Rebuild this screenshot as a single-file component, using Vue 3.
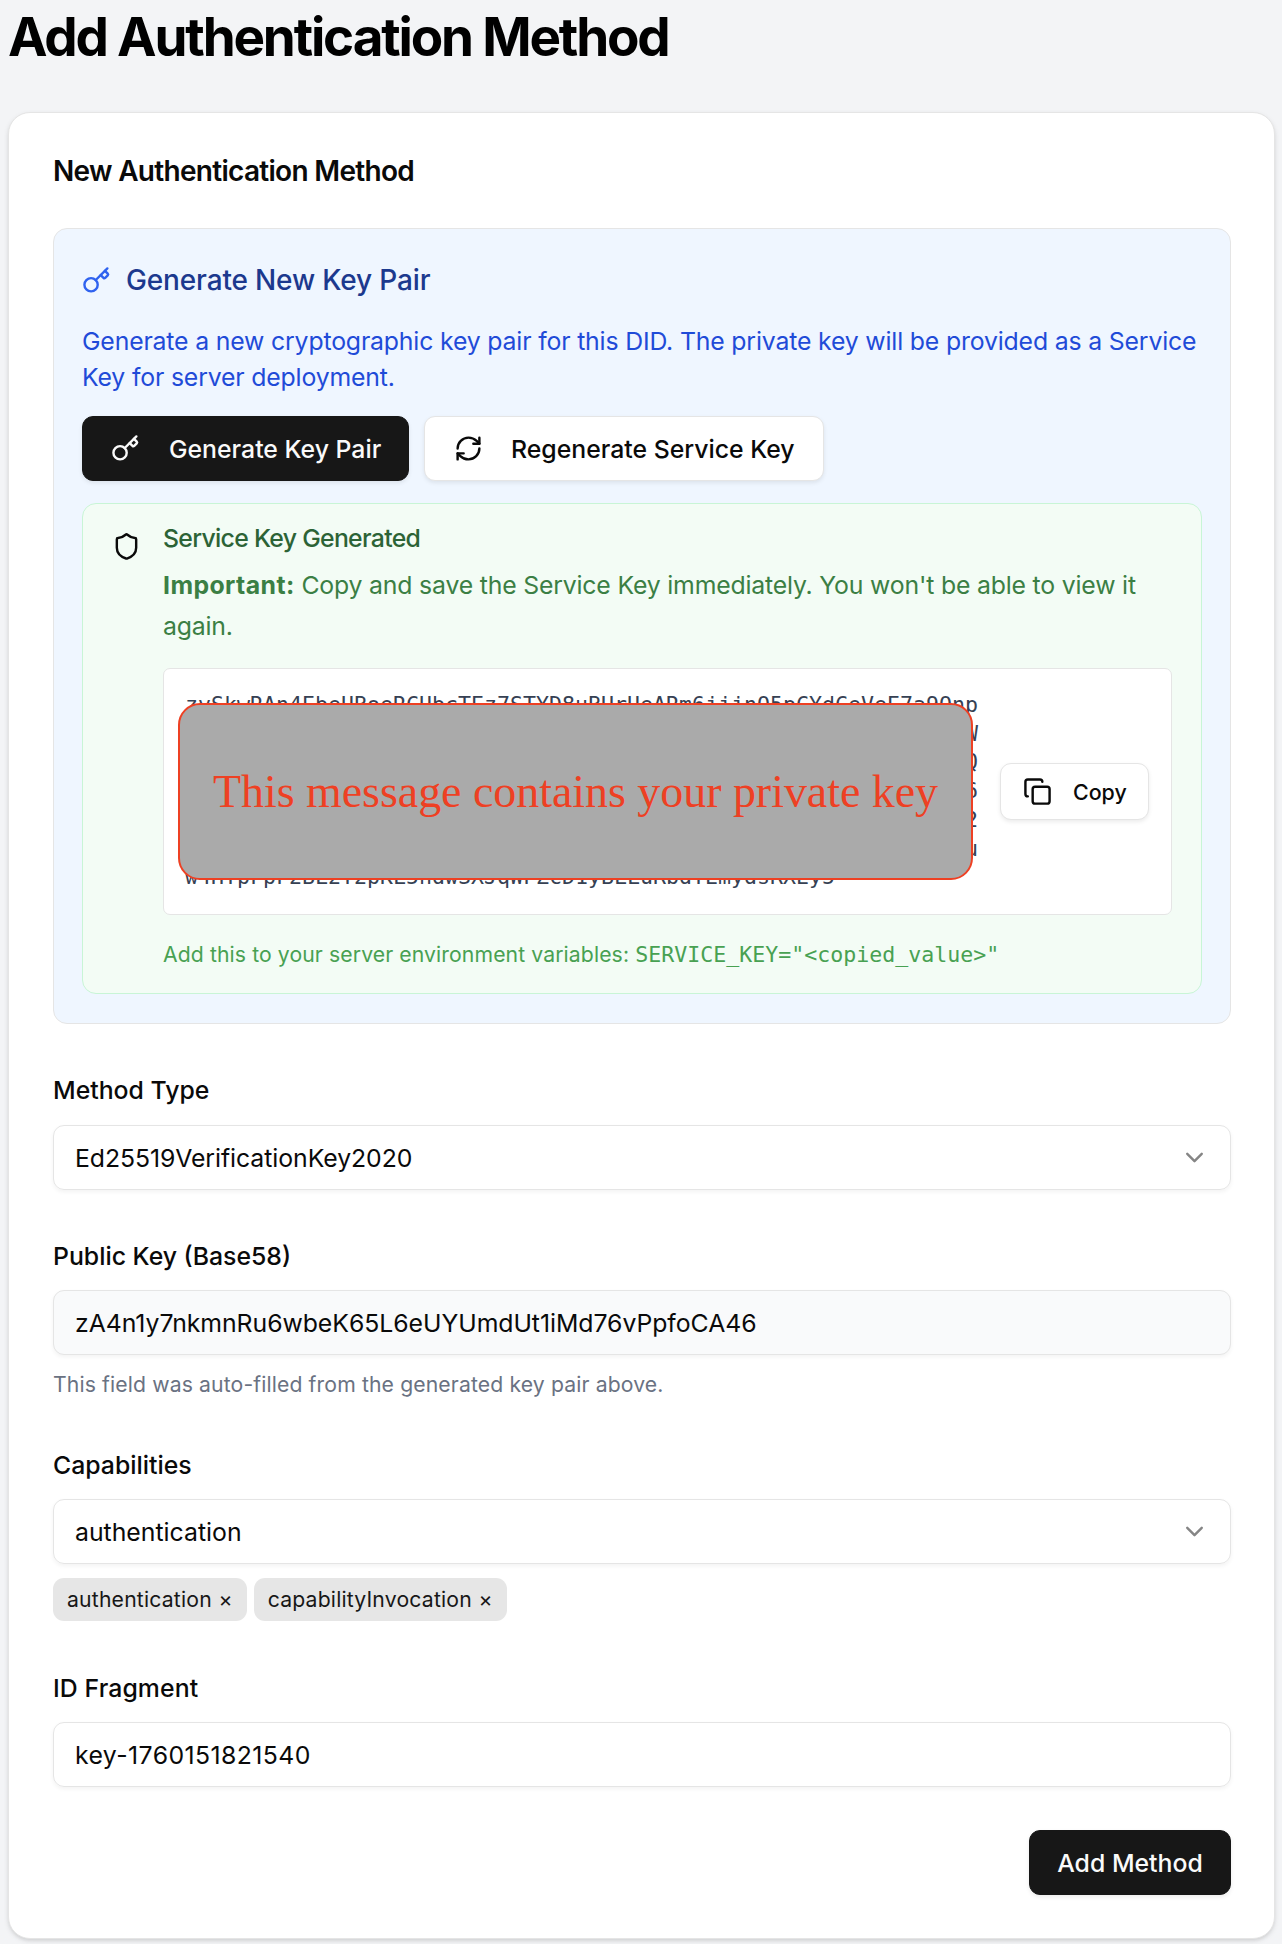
<script setup>
const keyLines = [
  'zvSkwRAn4EbeUBoeRCUbcTEz7STYD8uBHrUeARm6jjjnO5pCYdCeVeE7a9Onp',
  'W',
  'Q',
  '6',
  '2',
  'u',
  'w4HTpFpF2BL2T2pKL5ndwSXJqWFZcD1yBLLuRbdTEmydsRXEy5',
]
const chips = ['authentication', 'capabilityInvocation']
</script>

<template>
  <main class="page">
    <h1>Add Authentication Method</h1>
    <section class="card">
      <h2>New Authentication Method</h2>

      <div class="generate">
        <div class="gen-title">
          <svg class="icon blue" viewBox="0 0 24 24"><path d="m15.5 7.5 2.3 2.3a1 1 0 0 0 1.4 0l2.1-2.1a1 1 0 0 0 0-1.4L19 4" /><path d="m21 2-9.6 9.6" /><circle cx="7.5" cy="15.5" r="5.5" /></svg>
          <h3>Generate New Key Pair</h3>
        </div>
        <p class="desc">Generate a new cryptographic key pair for this DID. The private key will be provided as a Service<br>Key for server deployment.</p>
        <div class="actions">
          <button class="btn dark gen"><svg class="icon" viewBox="0 0 24 24"><path d="m15.5 7.5 2.3 2.3a1 1 0 0 0 1.4 0l2.1-2.1a1 1 0 0 0 0-1.4L19 4" /><path d="m21 2-9.6 9.6" /><circle cx="7.5" cy="15.5" r="5.5" /></svg><span>Generate Key Pair</span></button>
          <button class="btn light regen"><svg class="icon" viewBox="0 0 24 24"><path d="M3 12a9 9 0 0 1 9-9 9.75 9.75 0 0 1 6.74 2.74L21 8" /><path d="M21 3v5h-5" /><path d="M21 12a9 9 0 0 1-9 9 9.75 9.75 0 0 1-6.74-2.74L3 16" /><path d="M8 16H3v5" /></svg><span>Regenerate Service Key</span></button>
        </div>

        <div class="alert">
          <svg class="icon shield" viewBox="0 0 24 24"><path d="M20 13c0 5-3.5 7.5-7.66 8.95a1 1 0 0 1-.67-.01C7.5 20.5 4 18 4 13V6a1 1 0 0 1 1-1c2 0 4.5-1.2 6.24-2.72a1.17 1.17 0 0 1 1.52 0C14.51 3.81 17 5 19 5a1 1 0 0 1 1 1z" /></svg>
          <div class="alert-body">
            <h4>Service Key Generated</h4>
            <p class="important"><strong>Important:</strong> Copy and save the Service Key immediately. You won't be able to view it<br>again.</p>
            <div class="keybox">
              <code class="key"><span v-for="(line, i) in keyLines" :key="i" :class="{ tail: line.length === 1 }">{{ line }}</span></code>
              <button class="btn light copy"><svg class="icon" viewBox="0 0 24 24"><rect x="8" y="8" width="14" height="14" rx="2" /><path d="M4 16c-1.1 0-2-.9-2-2V4c0-1.1.9-2 2-2h10c1.1 0 2 .9 2 2" /></svg><span>Copy</span></button>
              <div class="cover">This message contains your private key</div>
            </div>
            <p class="env">Add this to your server environment variables: <code>SERVICE_KEY="&lt;copied_value&gt;"</code></p>
          </div>
        </div>
      </div>

      <div class="field f1">
        <label>Method Type</label>
        <div class="control"><span class="method">Ed25519VerificationKey2020</span><svg class="icon chev" viewBox="0 0 24 24"><path d="m6 9 6 6 6-6" /></svg></div>
      </div>
      <div class="field">
        <label>Public Key (Base58)</label>
        <div class="control filled"><span class="pub">zA4n1y7nkmnRu6wbeK65L6eUYUmdUt1iMd76vPpfoCA46</span></div>
        <p class="help">This field was auto-filled from the generated key pair above.</p>
      </div>
      <div class="field">
        <label>Capabilities</label>
        <div class="control"><span>authentication</span><svg class="icon chev" viewBox="0 0 24 24"><path d="m6 9 6 6 6-6" /></svg></div>
        <div class="chips"><span v-for="c in chips" :key="c" class="chip">{{ c }} <span class="x">×</span></span></div>
      </div>
      <div class="field f4">
        <label>ID Fragment</label>
        <div class="control"><span class="fragment">key-1760151821540</span></div>
      </div>
      <div class="footer"><button class="btn dark add">Add Method</button></div>
    </section>
  </main>
</template>

<style>
body { margin: 0; background: #f3f4f6; }
</style>

<style scoped>
* { box-sizing: border-box; }
h1, h2, h3, h4, p { margin: 0; white-space: nowrap; }
.page { height: 1944px; overflow: hidden; padding: 4px 7px 0 8px; font: 25.2px/36px Inter, "Liberation Sans", sans-serif; color: #0a0a0a; background: #f3f4f6; }
span { white-space: nowrap; }
h1 { height: 108px; font-size: 53px; line-height: 66px; font-weight: 700; letter-spacing: -2.17px; color: #000; }
.card { height: 1827px; padding: 43px 43px 0 44px; border: 1px solid #e5e5e5; border-radius: 22px; background: #fff; box-shadow: 0 2px 5px rgba(0,0,0,.1), 0 2px 4px -2px rgba(0,0,0,.1); }
h2 { height: 72px; line-height: 31px; font-size: 28px; font-weight: 600; letter-spacing: -.7px; }
.icon { flex: none; width: 29px; height: 29px; fill: none; stroke: currentColor; stroke-width: 2; stroke-linecap: round; stroke-linejoin: round; }
.generate { height: 796px; padding: 28px; border: 1px solid #e5e5e5; border-radius: 14px; background: #eff6ff; }
.gen-title { display: flex; align-items: center; gap: 15px; height: 46px; color: #1c398e; }
h3 { font-size: 28px; font-weight: 500; letter-spacing: -.15px; }
.blue { color: #2f62ef; }
.desc { height: 72px; margin-top: 20px; color: #1f4bd8; font-size: 24.8px; letter-spacing: -.16px; }
.actions { display: flex; gap: 15px; margin-top: 21px; }
.btn { display: flex; align-items: center; height: 65px; padding: 0 28px; border: 1px solid #e5e5e5; border-radius: 11px; font: 500 24.8px/36px Inter, "Liberation Sans", sans-serif; box-shadow: 0 2px 4px rgba(0,0,0,.08); color: #0a0a0a; background: #fff; white-space: nowrap; }
.dark { color: #fafafa; background: #171717; border-color: #171717; }
.gen { width: 327px; gap: 29px; }
.regen { width: 400px; padding-left: 29px; gap: 28px; }
.alert { display: flex; height: 491px; margin-top: 22px; padding: 22px 28px 0 29px; border: 1px solid #c8f5d6; border-radius: 14px; background: #f3fcf5; }
.shield { margin: 6px 22px 0 0; }
.alert-body { flex: 1; }
h4 { height: 29px; line-height: 25px; font-weight: 500; font-size: 24.8px; letter-spacing: -.7px; color: #2c6336; }
.important { margin-top: 10px; line-height: 41px; font-size: 24.8px; letter-spacing: -.18px; color: #3b7f44; }
.important strong { font-weight: 700; letter-spacing: .42px; }
.keybox { position: relative; display: flex; align-items: center; width: 1009px; height: 247px; margin-top: 21px; padding: 0 21px; border: 1px solid #e5e5e5; border-radius: 7px; background: #fff; }
.key { width: 793px; margin-right: 22px; font: 21.6px/28.8px "DejaVu Sans Mono", monospace; color: #364153; }
.key span { display: block; width: fit-content; }
.key .tail { margin-left: auto; }
.copy { width: 149px; height: 57px; padding: 0 20px 0 22px; gap: 21px; font-size: 21.4px; }
.cover { position: absolute; left: 14px; top: 34px; width: 795px; height: 177px; display: flex; align-items: center; justify-content: center; border: 2px solid #ee4023; border-radius: 22px; background: #aaa; color: #ee4023; font: 45.9px/52px "Liberation Serif", serif; white-space: nowrap; }
.env { margin-top: 21px; font-size: 21.2px; letter-spacing: .1px; color: #48a152; }
.env code { font: 21.6px/36px "DejaVu Sans Mono", monospace; letter-spacing: 0; }
.field { display: flex; flex-direction: column; margin-top: 54px; }
label { height: 25px; line-height: 25px; font-weight: 500; font-size: 24.8px; }
.control { display: flex; align-items: center; justify-content: space-between; height: 65px; margin-top: 21px; padding: 0 21px; border: 1px solid #e5e5e5; border-radius: 11px; box-shadow: 0 2px 4px rgba(0,0,0,.05); font-size: 24.8px; }
.f1 .control { margin-top: 22px; }
.filled { background: #f9fafb; }
.method { letter-spacing: -.06px; }
.pub { letter-spacing: -.04px; }
.fragment { letter-spacing: .42px; }
.chev { color: #858585; }
.f4 { margin-top: 55px; }
.f4 label { letter-spacing: .1px; }
.help { margin-top: 15px; height: 29px; line-height: 29px; font-size: 21.2px; letter-spacing: .12px; color: #6a7282; }
.chips { display: flex; gap: 7px; margin-top: 14px; }
.chip { height: 43px; padding: 0 14px; line-height: 43px; border-radius: 11px; background: #e6e6e6; color: #171717; font-size: 21.2px; letter-spacing: .18px; }
.x { margin-left: .5px; }
.footer { display: flex; justify-content: flex-end; margin-top: 43px; }
.add { width: 202px; justify-content: center; }
</style>
